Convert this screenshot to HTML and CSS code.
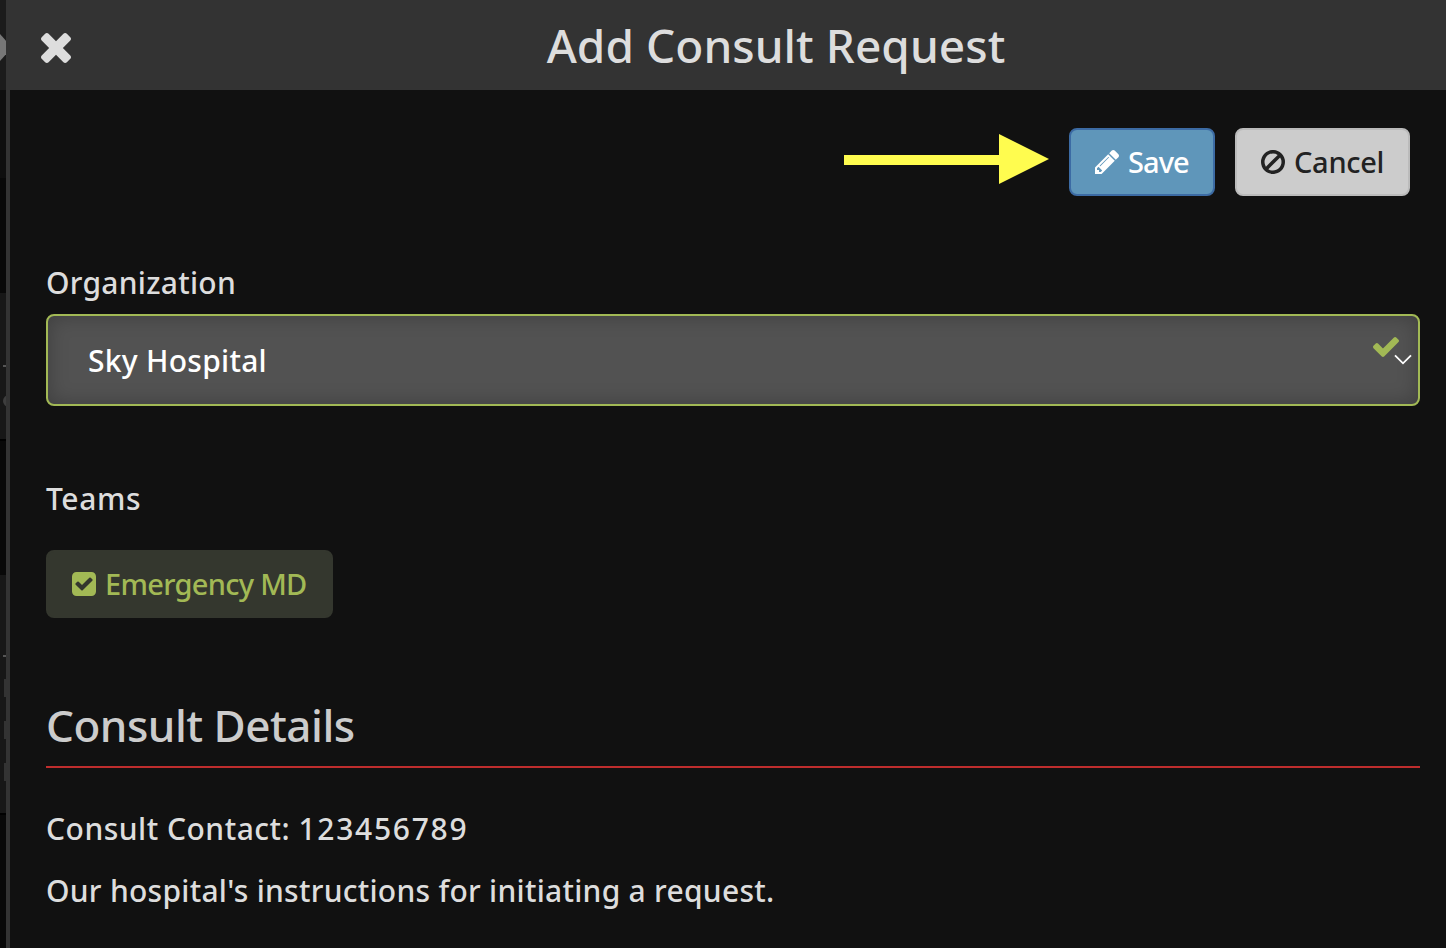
FILE: index.html
```html
<!DOCTYPE html>
<html lang="en">
<head>
    <meta charset="UTF-8">
    <meta name="viewport" content="width=device-width, initial-scale=1.0">
    <title>Add Consult Request</title>
    <link rel="stylesheet" href="styles.css">
</head>
<body>
<div class="page">
    <!-- Sliver of the page behind the panel -->
    <div class="behind">
        <div class="behind-head"><span class="knob"></span></div>
        <div class="behind-row"></div>
        <div class="behind-gap"></div>
        <div class="behind-card">
            <span class="dash"></span>
            <span class="dot"></span>
        </div>
        <div class="behind-gap tall"></div>
        <div class="behind-card second">
            <span class="dash"></span>
            <span class="letter"></span>
            <span class="letter"></span>
            <span class="letter"></span>
        </div>
    </div>

    <div class="panel">
        <header class="panel-header">
            <button class="closeBtn" aria-label="Close">
                <svg viewBox="302 366 1188 1188"><path d="M1490 1322q0 40-28 68l-136 136q-28 28-68 28t-68-28l-294-294-294 294q-28 28-68 28t-68-28l-136-136q-28-28-28-68t28-68l294-294-294-294q-28-28-28-68t28-68l136-136q28-28 68-28t68 28l294 294 294-294q28-28 68-28t68 28l136 136q28 28 28 68t-28 68l-294 294 294 294q28 28 28 68z"/></svg>
            </button>
            <h1>Add Consult Request</h1>
        </header>

        <main class="panel-body">
            <div class="actions">
                <svg class="arrow" viewBox="0 0 205 50"><path d="M0 21h155V0l50 25-50 25V31H0z"/></svg>
                <button class="btn saveBtn">
                    <svg viewBox="128 149 1515 1515"><path d="M491 1536l91-91-235-235-91 91v107h128v128h107zm523-928q0-22-22-22-10 0-17 7l-542 542q-7 7-7 17 0 22 22 22 10 0 17-7l542-542q7-7 7-17zm-54-192l416 416-832 832h-416v-416zm683 96q0 53-37 90l-166 166-416-416 166-165q36-38 90-38 53 0 91 38l235 234q37 39 37 91z"/></svg>
                    <span>Save</span>
                </button>
                <button class="btn cancelBtn">
                    <svg viewBox="128 125 1536 1536"><path d="M1440 893q0-161-87-295l-754 753q137 89 297 89 111 0 211.500-43.500t173.500-116.500 116-174.500 43-212.500zm-999 299l755-754q-135-91-300-91-148 0-273 73t-198 199-73 274q0 162 89 299zm1223-299q0 157-61 300t-163.500 246-245 164-298.500 61-298.500-61-245-164-163.500-246-61-300 61-299.500 163.500-245.500 245-164 298.500-61 298.500 61 245 164 163.500 245.500 61 299.500z"/></svg>
                    <span>Cancel</span>
                </button>
            </div>

            <div class="label orgLabel"><span>Organization</span></div>
            <div class="orgSelect">
                <span class="orgName">Sky Hospital</span>
                <svg class="valid" viewBox="121 334 1550 1188"><path d="M1671 566q0 40-28 68l-724 724-136 136q-28 28-68 28t-68-28l-136-136-362-362q-28-28-28-68t28-68l136-136q28-28 68-28t68 28l294 295 656-657q28-28 68-28t68 28l136 136q28 28 28 68z"/></svg>
                <svg class="chevron" viewBox="0 0 18 11"><path d="M1 1.300l8 8 8-8"/></svg>
            </div>

            <div class="label teamsLabel"><span>Teams</span></div>
            <button class="btn teamBtn">
                <svg viewBox="128 128 1536 1536"><path d="M813 1299l614-614q19-19 19-45t-19-45l-102-102q-19-19-45-19t-45 19l-467 467-211-211q-19-19-45-19t-45 19l-102 102q-19 19-19 45t19 45l358 358q19 19 45 19t45-19zm851-883v960q0 119-84.500 203.500t-203.500 84.500h-960q-119 0-203.500-84.500t-84.500-203.500v-960q0-119 84.500-203.500t203.500-84.500h960q119 0 203.500 84.500t84.500 203.500z"/></svg>
                <span>Emergency MD</span>
            </button>

            <h2><span>Consult Details</span></h2>
            <p class="contact"><span>Consult Contact: </span><span class="phone">123456789</span></p>
            <p class="instructions"><span>Our hospital's instructions for initiating a request.</span></p>
        </main>
    </div>
</div>
</body>
</html>
```

FILE: styles.css
```css
* {
    box-sizing: border-box;
}

body {
    margin: 0;
    background-color: #111;
    color: #ddd;
    font-family: "Noto Sans", "Open Sans", sans-serif;
    font-size: 30px;
    font-weight: 500;
    letter-spacing: 0.27px;
}

svg {
    display: block;
    flex: none;
    fill: currentColor;
}

.page {
    display: flex;
    height: 948px;
    overflow: hidden;
}

/* Page behind the panel */
.behind {
    width: 6px;
    flex: none;
    overflow: hidden;
    background-color: #080808;
}

.behind-head {
    height: 90px;
    padding-top: 34px;
    background-color: #1b1b1b;
}

.knob {
    display: block;
    width: 6px;
    height: 27px;
    background-color: #777;
    clip-path: polygon(0 0, 100% 25%, 100% 75%, 0 100%);
}

.behind-row {
    height: 88px;
    background-color: #0e0e0e;
}

.behind-gap {
    height: 115px;
}

.behind-gap.tall {
    height: 134px;
}

.behind-card {
    height: 148px;
    padding-top: 72px;
    background-color: #171717;
    border-bottom: 2px solid #000;
}

.behind-card.second {
    height: 240px;
    padding-top: 80px;
}

.dash {
    display: block;
    width: 3px;
    height: 2px;
    margin-left: 3px;
    background-color: #555;
}

.dot {
    display: block;
    width: 12px;
    height: 12px;
    margin: 28px 0 0 3px;
    border-radius: 50%;
    background-color: #3d3d3d;
}

.letter {
    display: block;
    width: 2px;
    height: 18px;
    margin: 22px 0 24px 4px;
    background-color: #333;
}

.letter + .letter {
    margin-top: 0;
}

/* Panel */
.panel {
    flex: 1;
    border-left: 4px solid #333;
}

.panel-header {
    display: flex;
    align-items: center;
    height: 90px;
    background-color: #333;
}

.closeBtn {
    width: 96px;
    height: 90px;
    padding: 5px 0 0 31px;
    border: none;
    background: none;
    color: #ddd;
    cursor: pointer;
}

.closeBtn svg {
    width: 30px;
    height: 30px;
}

h1 {
    flex: 1;
    margin: 0;
    padding-bottom: 1px;
    font-size: 46px;
    font-weight: 500;
    line-height: 88px;
    letter-spacing: 0.05px;
    text-align: center;
}

.panel-body {
    padding: 38px 26px 0 36px;
}

.actions {
    display: flex;
    justify-content: flex-end;
    padding-right: 10px;
}

.arrow {
    width: 205px;
    height: 50px;
    margin: 6px 20px 0 0;
    fill: #fffc4f;
}

.btn {
    display: flex;
    align-items: center;
    height: 68px;
    padding: 0 24px;
    border: 2px solid;
    border-radius: 8px;
    font: inherit;
    font-size: 29px;
    white-space: nowrap;
    cursor: pointer;
}

.btn svg {
    width: 24px;
    height: 24px;
    margin-right: 9px;
}

.btn span {
    padding-bottom: 2px;
}

.saveBtn {
    width: 146px;
    margin-right: 20px;
    background-color: #5f96ba;
    border-color: #3c6ba4;
    color: #fff;
    letter-spacing: -0.9px;
}

.cancelBtn {
    width: 175px;
    background-color: #ccc;
    border-color: #bbb;
    color: #222;
    letter-spacing: -0.3px;
}

.label {
    height: 42px;
    line-height: 42px;
}

.orgLabel {
    margin-top: 66px;
}

.orgSelect {
    display: flex;
    align-items: flex-start;
    height: 92px;
    margin-top: 10px;
    padding: 0 6px 0 40px;
    border: 2px solid #a2b955;
    border-radius: 8px;
    background-color: #525252;
    box-shadow: inset 0 0 20px rgba(0, 0, 0, 0.25);
    color: #fff;
}

.orgName {
    flex: 1;
    line-height: 90px;
}

.valid {
    width: 26px;
    height: 20px;
    margin-top: 21px;
    fill: #a2b955;
}

.chevron {
    width: 18px;
    height: 11px;
    margin: 38px 0 0 -5px;
    fill: none;
    stroke: #fff;
    stroke-width: 1.8;
}

.teamsLabel {
    margin-top: 72px;
    letter-spacing: 0.6px;
}

.teamBtn {
    width: 287px;
    margin-top: 30px;
    background-color: #34372e;
    border-color: #34372e;
    color: #a2b955;
    letter-spacing: -0.7px;
}

h2 {
    height: 68px;
    margin: 82px 0 0;
    border-bottom: 2px solid #bf2d2d;
    color: #ccc;
    font-size: 44px;
    font-weight: 500;
    line-height: 50px;
    letter-spacing: -0.5px;
}

p {
    height: 42px;
    margin: 40px 0 0;
    line-height: 42px;
    white-space: pre;
}

.contact {
    letter-spacing: 0.5px;
}

.phone {
    letter-spacing: 1.7px;
}

.instructions {
    margin-top: 20px;
}
```
